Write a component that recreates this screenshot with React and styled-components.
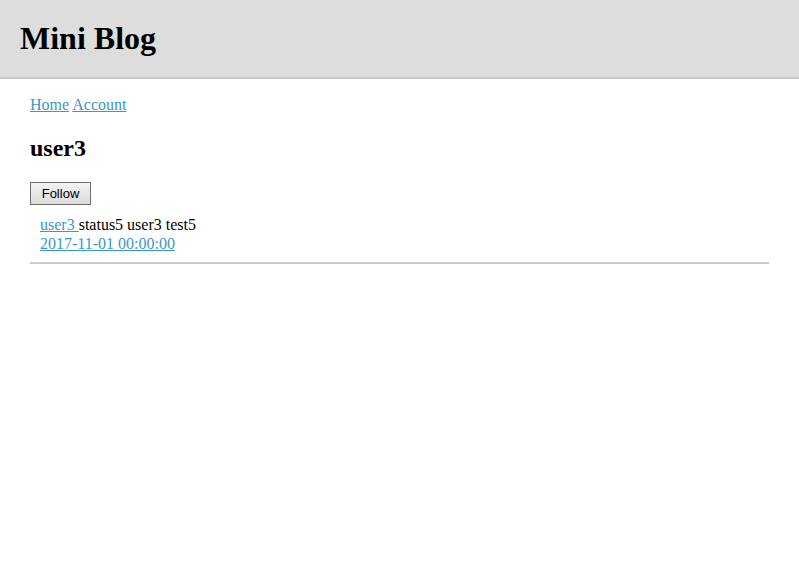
import React from "react";
import styled, { createGlobalStyle } from "styled-components";

const GlobalStyle = createGlobalStyle`
  body {
    margin: 0;
    font-family: "Liberation Serif", "Times New Roman", serif;
    font-size: 16px;
    color: #000;
    background: #fff;
  }
`;

const App = () => {
  return (
    <>
      <GlobalStyle />
      <Header>
        <Title>Mini Blog</Title>
      </Header>
      <Main>
        <Nav>
          <Link href="#">Home</Link> <Link href="#">Account</Link>
        </Nav>
        <UserName>user3</UserName>
        <FollowRow>
          <FollowButton type="button">Follow</FollowButton>
        </FollowRow>
        <StatusList>
          <Status>
            <div>
              <Link href="#">user3 </Link>status5 user3 test5
            </div>
            <div>
              <Link href="#">2017-11-01 00:00:00</Link>
            </div>
          </Status>
        </StatusList>
      </Main>
    </>
  );
};

const Header = styled.header`
  height: 77px;
  background-color: #dddddd;
  border-bottom: 2px solid #c8c8c8;
  padding: 0 20px;
  display: flex;
  align-items: center;
`;
const Title = styled.h1`
  margin: 0;
  font-size: 32px;
  font-weight: bold;
`;
const Main = styled.main`
  padding: 17px 30px;
`;
const Nav = styled.nav`
  line-height: 18px;
`;
const Link = styled.a`
  color: #3a97c6;
  text-decoration: underline;
`;
const UserName = styled.h2`
  font-size: 24px;
  margin: 21px 0 20px;
`;
const FollowRow = styled.div`
  margin-bottom: 10px;
`;
const FollowButton = styled.button`
  font-family: "Liberation Sans", Arial, sans-serif;
  font-size: 13px;
  width: 61px;
  height: 23px;
  padding: 0;
  background: linear-gradient(#f2f2f2, #dcdcdc);
  border: 1px solid #707070;
  border-radius: 0;
  color: #000;
`;
const StatusList = styled.div`
  display: flex;
  flex-direction: column;
`;
const Status = styled.div`
  padding: 0 10px 9px;
  line-height: 19px;
  border-bottom: 2px solid #cccccc;
`;

export default App;
